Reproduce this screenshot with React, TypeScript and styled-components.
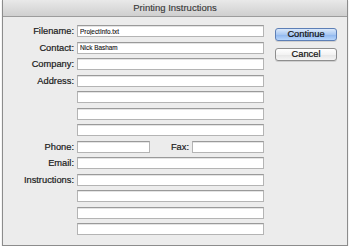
import React from "react";
import styled, { createGlobalStyle } from "styled-components";

const Global = createGlobalStyle`
  html, body { margin: 0; padding: 0; background: #ffffff; }
  body { font-family: "Liberation Sans", Arial, sans-serif; }
  * { box-sizing: border-box; }
`;

const Window = styled.div`
  margin-left: 2px;
  width: 346px;
  border: 1px solid #8c8c8c;
  border-top: none;
  background: #ececec;
  box-shadow: 0 1px 1px rgba(0, 0, 0, 0.25);
`;

const TitleBar = styled.div`
  height: 17px;
  display: flex;
  align-items: center;
  justify-content: center;
  background: linear-gradient(#e9e9e9, #cfcfcf);
  border-bottom: 1px solid #9c9c9c;
  font-size: 9.5px;
  color: #3a3a3a;
  -webkit-text-stroke: 0.15px #3a3a3a;
  padding-bottom: 1px;
`;

const Body = styled.div`
  display: flex;
  align-items: flex-start;
  padding: 8px 10px 10px 0;
`;

const Fields = styled.div`
  display: grid;
  grid-template-columns: 71px 187px;
  column-gap: 3px;
  row-gap: 4.5px;
`;

const Label = styled.label`
  height: 12px;
  display: flex;
  align-items: center;
  justify-content: flex-end;
  font-size: 9.3px;
  color: #1a1a1a;
  -webkit-text-stroke: 0.2px #1a1a1a;
  white-space: nowrap;
`;

const Field = styled.input<{ $w?: number }>`
  width: ${(p) => (p.$w ? `${p.$w}px` : "100%")};
  height: 12px;
  margin: 0;
  padding: 0 0 0 2px;
  border: 1px solid #b4b4b4;
  border-top-color: #9a9a9a;
  background: #ffffff;
  font-family: "Liberation Sans", Arial, sans-serif;
  font-size: 6.4px;
  color: #111;
  -webkit-text-stroke: 0.1px #111;
  outline: none;
  box-shadow: inset 0 1px 0 #e4e4e4;
`;

const SplitRow = styled.div`
  display: flex;
  align-items: center;
  height: 12px;
`;

const InlineLabel = styled(Label)`
  flex: 1;
  padding-right: 3px;
`;

const Buttons = styled.div`
  display: flex;
  flex-direction: column;
  gap: 7px;
  margin-left: 11px;
  padding-top: 2.5px;
`;

const Button = styled.button<{ $primary?: boolean }>`
  width: 62px;
  height: 13px;
  padding: 0;
  border-radius: 3px;
  font-family: "Liberation Sans", Arial, sans-serif;
  font-size: 9.3px;
  line-height: 11px;
  color: #111;
  -webkit-text-stroke: 0.2px #111;
  border: 1px solid ${(p) => (p.$primary ? "#5d7fb6" : "#8e8e8e")};
  background: ${(p) =>
    p.$primary
      ? "linear-gradient(#dbe9fb 0%, #a9c8f2 50%, #8db5ee 51%, #b8d6fb 100%)"
      : "linear-gradient(#ffffff 0%, #f3f3f3 50%, #e6e6e6 51%, #f4f4f4 100%)"};
  box-shadow: 0 1px 0 rgba(0, 0, 0, 0.12);
`;

type Row = { label: string; value?: string };

const topRows: Row[] = [
  { label: "Filename:", value: "ProjectInfo.txt" },
  { label: "Contact:", value: "Nick Basham" },
  { label: "Company:" },
  { label: "Address:" },
  { label: "" },
  { label: "" },
  { label: "" },
];

const bottomRows: Row[] = [
  { label: "Email:" },
  { label: "Instructions:" },
  { label: "" },
  { label: "" },
  { label: "" },
];

const renderRows = (rows: Row[], prefix: string) =>
  rows.map((r, i) => (
    <React.Fragment key={`${prefix}${i}`}>
      <Label>{r.label}</Label>
      <Field readOnly defaultValue={r.value ?? ""} />
    </React.Fragment>
  ));

export default function App() {
  return (
    <>
      <Global />
      <Window>
        <TitleBar>Printing Instructions</TitleBar>
        <Body>
          <Fields>
            {renderRows(topRows, "t")}
            <Label>Phone:</Label>
            <SplitRow>
              <Field $w={73} readOnly defaultValue="" />
              <InlineLabel>Fax:</InlineLabel>
              <Field $w={72} readOnly defaultValue="" />
            </SplitRow>
            {renderRows(bottomRows, "b")}
          </Fields>
          <Buttons>
            <Button $primary>Continue</Button>
            <Button>Cancel</Button>
          </Buttons>
        </Body>
      </Window>
    </>
  );
}
